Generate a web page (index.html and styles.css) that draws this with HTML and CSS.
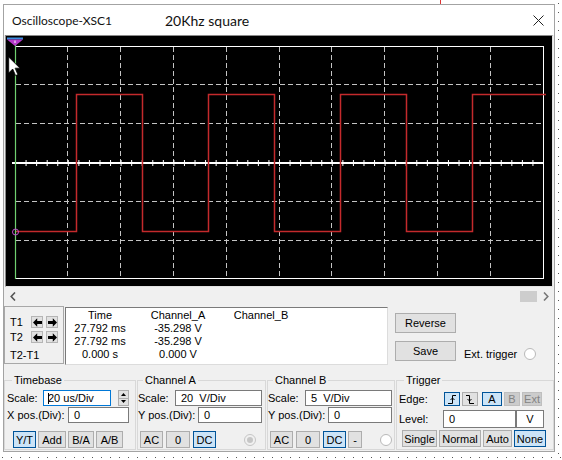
FILE: index.html
```html
<!DOCTYPE html>
<html lang="en">
<head>
    <meta charset="UTF-8">
    <meta name="viewport" content="width=device-width, initial-scale=1.0">
    <title>Oscilloscope-XSC1</title>
    <link rel="stylesheet" href="styles.css">
</head>
<body>
    <div class="window">
        <!-- Title bar -->
        <div class="titlebar">
            <span class="title-name">Oscilloscope-XSC1</span>
            <span class="title-desc">20Khz square</span>
            <svg class="close" width="11" height="11" viewBox="0 0 11 11">
                <path d="M0.5 0.5L10.5 10.5M10.5 0.5L0.5 10.5" stroke="#222" stroke-width="1"/>
            </svg>
        </div>

        <!-- Scope screen -->
        <div class="scope">
            <svg class="screen" width="546" height="250" viewBox="0 0 546 250">
                <g stroke="#c4c4c4" stroke-dasharray="5 3" fill="none">
                    <path d="M10 48.5H537M10 87.5H537M10 165.5H537M10 204.5H537"/>
                    <path d="M61.5 11V242M114.5 11V242M167.5 11V242M220.5 11V242M273.5 11V242M325.5 11V242M378.5 11V242M431.5 11V242M484.5 11V242"/>
                </g>
                <rect x="9.5" y="10.5" width="528" height="232" fill="none" stroke="#fff"/>
                <line x1="6" y1="127" x2="538" y2="127" stroke="#fff" stroke-width="2"/>
                <line x1="9" y1="127" x2="538" y2="127" stroke="#fff" stroke-width="6" stroke-dasharray="1 9.56"/>
                <path d="M9.5 195.5H70.5V58.5H136.5V195.5H202.5V58.5H268.5V195.5H334.5V58.5H400.5V195.5H466.5V58.5H540" fill="none" stroke="#c42a2c" stroke-width="1.5"/>
                <line x1="9.5" y1="8" x2="9.5" y2="243" stroke="#6fd06f" stroke-width="1.2"/>
                <circle cx="9.5" cy="196" r="3" fill="none" stroke="#c24fd0" stroke-width="1"/>
                <!-- cursor T1 marker -->
                <rect x="1" y="1.5" width="16" height="2" fill="#3b8fe0"/>
                <path d="M1 3.5H17L9 10Z" fill="#b53cca"/>
                <line x1="9" y1="4.5" x2="9" y2="7" stroke="#fff" stroke-width="1"/>
                <!-- mouse pointer -->
                <path d="M2.7 21V37L6.7 33L9.6 39.6L11.9 38.6L9.1 32.2H14Z" fill="#fff" stroke="#000" stroke-width="0.8" stroke-linejoin="round"/>
            </svg>
        </div>

        <!-- Horizontal scrollbar -->
        <div class="scrollbar">
            <svg width="6" height="9" viewBox="0 0 6 9"><path d="M5 0.5L1.2 4.5L5 8.5" stroke="#555" stroke-width="1.6" fill="none"/></svg>
            <span class="thumb"></span>
            <svg class="next" width="6" height="9" viewBox="0 0 6 9"><path d="M1 0.5L4.8 4.5L1 8.5" stroke="#777" stroke-width="1.6" fill="none"/></svg>
        </div>

        <!-- Cursor readout -->
        <div class="readout">
            <div class="cursors">
                <div class="cur-row">
                    <span class="cur-label">T1</span>
                    <button class="arrow"><svg width="9" height="9" viewBox="0 0 9 9"><path d="M0 4.5L4.2 0.3V3H9V6H4.2V8.7Z"/></svg></button>
                    <button class="arrow"><svg width="9" height="9" viewBox="0 0 9 9"><path d="M9 4.5L4.8 0.3V3H0V6H4.8V8.7Z"/></svg></button>
                </div>
                <div class="cur-row">
                    <span class="cur-label">T2</span>
                    <button class="arrow"><svg width="9" height="9" viewBox="0 0 9 9"><path d="M0 4.5L4.2 0.3V3H9V6H4.2V8.7Z"/></svg></button>
                    <button class="arrow"><svg width="9" height="9" viewBox="0 0 9 9"><path d="M9 4.5L4.8 0.3V3H0V6H4.8V8.7Z"/></svg></button>
                </div>
                <div class="cur-row cur-diff">T2-T1</div>
            </div>
            <div class="data">
                <span>Time</span><span>Channel_A</span><span>Channel_B</span>
                <span>27.792 ms</span><span>-35.298 V</span><span></span>
                <span>27.792 ms</span><span>-35.298 V</span><span></span>
                <span>0.000 s</span><span>0.000 V</span><span></span>
            </div>
            <div class="actions">
                <button class="btn">Reverse</button>
                <button class="btn">Save</button>
            </div>
            <div class="ext">Ext. trigger <span class="radio"></span></div>
        </div>

        <!-- Settings -->
        <div class="controls">
            <fieldset class="group timebase">
                <legend>Timebase</legend>
                <div class="row first">
                    <span class="scale-lbl">Scale:</span>
                    <div class="field focus scale-field"><i class="caret"></i>20 us/Div</div>
                    <div class="spin">
                        <span class="spin-btn"><svg width="5" height="3" viewBox="0 0 5 3"><path d="M0 3L2.5 0L5 3Z"/></svg></span>
                        <span class="spin-btn"><svg width="5" height="3" viewBox="0 0 5 3"><path d="M0 0L2.5 3L5 0Z"/></svg></span>
                    </div>
                </div>
                <div class="row">
                    <span class="pos-lbl">X pos.(Div):</span>
                    <div class="field pos-field">0</div>
                </div>
                <div class="row btns">
                    <button class="btn on b-yt">Y/T</button>
                    <button class="btn b-add">Add</button>
                    <button class="btn b-ba">B/A</button>
                    <button class="btn b-ab">A/B</button>
                </div>
            </fieldset>

            <fieldset class="group channel">
                <legend>Channel A</legend>
                <div class="row first">
                    <span class="scale-lbl">Scale:</span>
                    <div class="field scale-field">20  V/Div</div>
                </div>
                <div class="row">
                    <span class="pos-lbl">Y pos.(Div):</span>
                    <div class="field pos-field">0</div>
                </div>
                <div class="row btns">
                    <button class="btn b-ac">AC</button>
                    <button class="btn b-zero">0</button>
                    <button class="btn on b-dc">DC</button>
                    <span class="radio dim"></span>
                </div>
            </fieldset>

            <fieldset class="group channel channel-b">
                <legend>Channel B</legend>
                <div class="row first">
                    <span class="scale-lbl">Scale:</span>
                    <div class="field scale-field">5  V/Div</div>
                </div>
                <div class="row">
                    <span class="pos-lbl">Y pos.(Div):</span>
                    <div class="field pos-field">0</div>
                </div>
                <div class="row btns">
                    <button class="btn b-ac">AC</button>
                    <button class="btn b-zero">0</button>
                    <button class="btn on b-dc">DC</button>
                    <button class="btn b-minus">-</button>
                    <span class="radio"></span>
                </div>
            </fieldset>

            <fieldset class="group trigger">
                <legend>Trigger</legend>
                <div class="row edge-row">
                    <span class="edge-lbl">Edge:</span>
                    <button class="btn on b-edge"><svg width="10" height="10" viewBox="0 0 10 10"><path d="M1 9.5H5.5V1.5H9M3.5 6L5.5 4L7.5 6" fill="none" stroke="#000"/></svg></button>
                    <button class="btn b-edge"><svg width="10" height="10" viewBox="0 0 10 10"><path d="M1 1.5H4.5V9.5H9M2.5 5L4.5 7L6.5 5" fill="none" stroke="#000"/></svg></button>
                    <button class="btn on b-src">A</button>
                    <button class="btn off b-b">B</button>
                    <button class="btn off b-ext">Ext</button>
                </div>
                <div class="row level-row">
                    <span class="level-lbl">Level:</span>
                    <div class="field level-field">0</div>
                    <div class="field unit-field">V</div>
                </div>
                <div class="row mode-row">
                    <button class="btn b-single">Single</button>
                    <button class="btn b-normal">Normal</button>
                    <button class="btn b-auto">Auto</button>
                    <button class="btn on b-none">None</button>
                </div>
            </fieldset>
        </div>
    </div>
</body>
</html>
```

FILE: styles.css
```css
* {
    margin: 0;
    padding: 0;
    box-sizing: border-box;
}

body {
    width: 562px;
    height: 460px;
    overflow: hidden;
    font-family: "Liberation Sans", Arial, sans-serif;
    font-size: 11px;
    color: #000;
    background-color: #fff;
    /* dotted workspace grid around the window */
    background-image:
        repeating-linear-gradient(to bottom, #555 0 1px, transparent 1px 9px),
        repeating-linear-gradient(to right, #555 0 1px, transparent 1px 9px),
        linear-gradient(#d33, #d33);
    background-size: 1px 100%, 100% 1px, 1px 4px;
    background-position: 558px 3px, 2px 457px, 440px 0;
    background-repeat: no-repeat;
}

.window {
    width: 552px;
    margin: 4px 0 0 3px;
    border: 1px solid #a3a3a3;
    background-color: #f0f0f0;
}

/* Title bar */
.titlebar {
    height: 30px;
    display: flex;
    align-items: center;
    padding: 1px 0 0 8px;
    background-color: #fff;
    font-family: Lato, "Open Sans", sans-serif;
    color: #111;
}

.title-name {
    width: 153px;
    font-size: 12px;
}

.title-desc {
    font-size: 14px;
}

.close {
    margin-left: auto;
    margin-right: 10px;
}

/* Scope screen */
.scope {
    height: 252px;
    margin: 0 1px;
    border: 1px solid;
    border-color: #8a8a8a #e3e3e3 #e3e3e3 #8a8a8a;
    background-color: #000;
}

.screen {
    display: block;
}

.scrollbar {
    height: 18px;
    display: flex;
    align-items: center;
    padding: 0 5px 0 6px;
}

.thumb {
    width: 17px;
    height: 11px;
    margin-left: auto;
    background-color: #cdcdcd;
}

.scrollbar .next {
    margin-left: 6px;
}

/* Cursor readout row */
.readout {
    height: 61px;
    display: flex;
    align-items: flex-start;
}

.cursors {
    width: 60px;
    height: 58px;
    margin-top: 1px;
    padding-left: 5px;
    border: 1px solid #a8a8a8;
}

.cur-row {
    height: 14px;
    display: flex;
    align-items: center;
    gap: 3px;
    margin-top: 1px;
}

.cur-row:first-child {
    margin-top: 8px;
}

.cur-row.cur-diff {
    margin-top: 4px;
}

.cur-label {
    width: 18px;
}

.arrow {
    width: 12px;
    height: 12px;
    display: flex;
    align-items: center;
    justify-content: center;
    border: 1px solid #b5b5b5;
    background-color: #e1e1e1;
}

.arrow svg {
    fill: #000;
}

.data {
    width: 323px;
    height: 58px;
    margin: 2px 0 0 1px;
    padding-top: 1px;
    display: grid;
    grid-template-columns: 68px 88px 78px;
    grid-auto-rows: 13px;
    line-height: 13px;
    text-align: center;
    background-color: #fff;
    border: 1px solid;
    border-color: #7a7a7a #dcdcdc #dcdcdc #7a7a7a;
}

.actions {
    width: 61px;
    margin-left: 7px;
    display: flex;
    flex-direction: column;
}

.actions .btn {
    height: 20px;
    margin-top: 8px;
}

.ext {
    margin: 43px 0 0 8px;
    display: flex;
    align-items: center;
    gap: 7px;
    white-space: nowrap;
}

/* Buttons and fields */
.btn {
    height: 100%;
    padding: 0;
    font-family: inherit;
    font-size: 11px;
    color: #000;
    border: 1px solid #adadad;
    background-color: #e1e1e1;
    display: flex;
    align-items: center;
    justify-content: center;
}

.btn.on {
    background-color: #cce4f7;
    border-color: #005499;
}

.btn.off {
    background-color: #cccccc;
    border-color: #bfbfbf;
    color: #838383;
}

.field {
    height: 16px;
    padding-left: 5px;
    display: flex;
    align-items: center;
    white-space: pre;
    background-color: #fff;
    border: 1px solid #7a7a7a;
}

.field.focus {
    border-color: #0078d7;
}

.caret {
    width: 1px;
    height: 11px;
    margin-right: -1px;
    background-color: #000;
}

.radio {
    width: 12px;
    height: 12px;
    border-radius: 50%;
    border: 1px solid #b9b9b9;
    background-color: #fff;
    flex-shrink: 0;
}

.radio.dim {
    display: flex;
    align-items: center;
    justify-content: center;
    background-color: #f0f0f0;
    border-color: #c6c6c6;
}

.radio.dim::after {
    content: "";
    width: 6px;
    height: 6px;
    border-radius: 50%;
    background-color: #c6c6c6;
}

/* Settings groups */
.controls {
    height: 85px;
    display: flex;
    gap: 1px;
}

.group {
    height: 76px;
    margin-top: 8px;
    min-width: 0;
    border: 1px solid #d8d8d8;
}

.group legend {
    margin-left: 5px;
    padding: 0 2px;
    line-height: 13px;
}

.row {
    height: 16px;
    margin-top: 1px;
    display: flex;
    align-items: center;
}

.row.first {
    margin-top: 3px;
}

.row.btns {
    height: 17px;
    margin-top: 8px;
    gap: 2px;
}

.timebase {
    width: 132px;
    padding-left: 2px;
}

.timebase .scale-lbl { width: 36px; }
.timebase .scale-field { width: 68px; padding-left: 4px; }
.timebase .pos-lbl { width: 61px; }
.timebase .pos-field { width: 61px; }
.timebase .btns { margin-left: 6px; }

.b-yt { width: 23px; }
.b-add { width: 28px; }
.b-ba { width: 26px; }
.b-ab { width: 27px; }

.spin {
    width: 11px;
    height: 16px;
    margin-left: 7px;
    display: flex;
    flex-direction: column;
}

.spin-btn {
    flex: 1;
    display: flex;
    align-items: center;
    justify-content: center;
    border: 1px solid #adadad;
    background-color: #e1e1e1;
}

.spin-btn + .spin-btn {
    border-top: none;
}

.channel {
    width: 129px;
}

.channel-b {
    width: 128px;
}

.channel .scale-lbl { width: 37px; }
.channel .scale-field { width: 87px; }
.channel .pos-lbl { width: 60px; }
.channel .pos-field { width: 64px; }
.channel .btns { margin-left: 2px; gap: 3px; }

.b-ac { width: 23px; }
.b-zero { width: 24px; }
.b-dc { width: 23px; }
.channel .b-minus { width: 14px; margin-left: -1px; }
.channel .radio { margin-left: 25px; }
.channel-b .radio { margin-left: 15px; }

.trigger {
    width: 158px;
    padding-left: 2px;
}

.edge-row {
    height: 14px;
    margin-top: 5px;
    gap: 2px;
}

.edge-lbl { width: 43px; }
.b-edge { width: 16px; }
.b-src { width: 20px; margin-left: 2px; }
.b-b { width: 16px; }
.b-ext { width: 20px; }

.level-row {
    height: 18px;
    margin-top: 4px;
}

.level-lbl { width: 44px; }
.level-field { width: 73px; height: 18px; }
.unit-field { width: 28px; height: 18px; padding: 0; justify-content: center; }

.mode-row {
    height: 17px;
    margin: 2px 0 0 3px;
    gap: 2px;
}

.b-single { width: 35px; }
.b-normal { width: 42px; }
.b-auto { width: 29px; }
.b-none { width: 32px; }
```
